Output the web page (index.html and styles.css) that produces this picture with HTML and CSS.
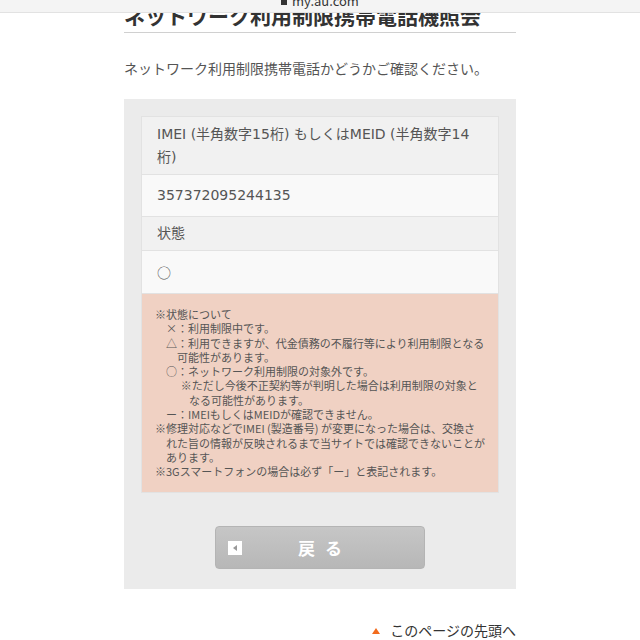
FILE: index.html
```html
<!DOCTYPE html>
<html lang="ja">
<head>
  <meta charset="UTF-8">
  <title>ネットワーク利用制限携帯電話機照会</title>
  <meta name="viewport" content="width=device-width, initial-scale=1.0">
  <link rel="stylesheet" href="styles.css">
</head>
<body>
<div class="urlbar">
  <span class="lock"></span>my.au.com
</div>

<div class="page">
  <h1>ネットワーク利用制限携帯電話機照会</h1>
  <p class="lead">ネットワーク利用制限携帯電話かどうかご確認ください。</p>

  <div class="result-box">
    <div class="result-table">
      <div class="row-label first">IMEI (半角数字15桁) もしくはMEID (半角数字14桁)</div>
      <div class="row-value">357372095244135</div>
      <div class="row-label second">状態</div>
      <div class="row-value status">○</div>
      <div class="note">
        <div>※状態について</div>
        <div class="ind1">×：利用制限中です。</div>
        <div class="hang2">△：利用できますが、代金債務の不履行等により利用制限となる可能性があります。</div>
        <div class="ind1">○：ネットワーク利用制限の対象外です。</div>
        <div class="hang3">※ただし今後不正契約等が判明した場合は利用制限の対象となる可能性があります。</div>
        <div class="ind1">ー：IMEIもしくはMEIDが確認できません。</div>
        <div class="hang1">※修理対応などでIMEI (製造番号) が変更になった場合は、交換された旨の情報が反映されるまで当サイトでは確認できないことがあります。</div>
        <div class="hang1">※3Gスマートフォンの場合は必ず「ー」と表記されます。</div>
      </div>
    </div>

    <div class="btn-wrap">
      <a class="btn-back" href="#"><span class="btn-icon"></span>戻る</a>
    </div>
  </div>

  <div class="pagetop"><a href="#"><span class="tri"></span>このページの先頭へ</a></div>
</div>
</body>
</html>
```

FILE: styles.css
```css
body { margin: 0; background: #fff; color: #444; font-family: "Noto Sans CJK JP", "Noto Sans", sans-serif; }
a { text-decoration: none; color: inherit; }

/* browser address bar, overlapping the scrolled page */
.urlbar { position: fixed; top: 0; left: 0; right: 0; height: 12px; background: #f4f4f4; border-bottom: 1px solid #e2e2e2; text-align: center; font-size: 13px; line-height: 0px; color: #333; overflow: hidden; z-index: 2; }
.lock { display: inline-block; width: 6px; height: 5px; background: #333; margin-right: 5px; vertical-align: 1px; }

.page { width: 392px; margin: 0 auto; }
h1 { margin: 0; height: 32px; line-height: 30px; font-size: 21px; font-weight: bold; color: #333; border-bottom: 1px solid #d0d0d0; white-space: nowrap; }
.lead { margin: 25px 0 21px; font-size: 14px; line-height: 20px; color: #555; }

.result-box { background: #ebebeb; padding: 17px 17px 0; overflow: hidden; }
.result-table { border: 1px solid #e2e2e2; font-family: "DejaVu Sans", "Noto Sans CJK JP", sans-serif; font-size: 14px; line-height: 23px; color: #555; }
.row-label { background: #f1f1f1; padding: 6px 15px 5px; border-bottom: 1px solid #e2e2e2; }
.row-label.second { padding: 5px 15px; }
.row-value { background: #f9f9f9; padding: 9px 15px; border-bottom: 1px solid #e2e2e2; }
.row-value.status { padding: 10px 15px 9px; font-family: "Noto Sans CJK JP", sans-serif; }

.note { background: #f0d1c3; padding: 13px 13px 13px; font-family: "Noto Sans CJK JP", sans-serif; font-size: 11px; line-height: 14.3px; color: #555; }
.ind1 { padding-left: 1em; }
.hang1 { padding-left: 1em; text-indent: -1em; }
.hang2 { padding-left: 2em; text-indent: -1em; }
.hang3 { padding-left: 3.1em; text-indent: -0.75em; }

.btn-wrap { padding: 33px 0 20px; text-align: center; }
.btn-back { display: inline-block; position: relative; width: 208px; height: 41px; line-height: 41px; border: 1px solid #b4b4b4; border-radius: 4px; background: linear-gradient(#c6c6c6, #b7b7b7); color: #fff; font-size: 17px; font-weight: bold; letter-spacing: 10px; text-indent: 10px; }
.btn-icon { position: absolute; left: 12px; top: 14px; width: 14px; height: 14px; background: #fff; }
.btn-icon::after { content: ""; position: absolute; left: 5px; top: 4px; border-style: solid; border-width: 3px 4px 3px 0; border-color: transparent #999 transparent transparent; }

.pagetop { margin-top: 31px; text-align: right; font-size: 14px; line-height: 20px; color: #333; }
.tri { display: inline-block; width: 0; height: 0; border-style: solid; border-width: 0 4px 6px 4px; border-color: transparent transparent #f26b1d transparent; margin-right: 10px; vertical-align: 2px; }
```
